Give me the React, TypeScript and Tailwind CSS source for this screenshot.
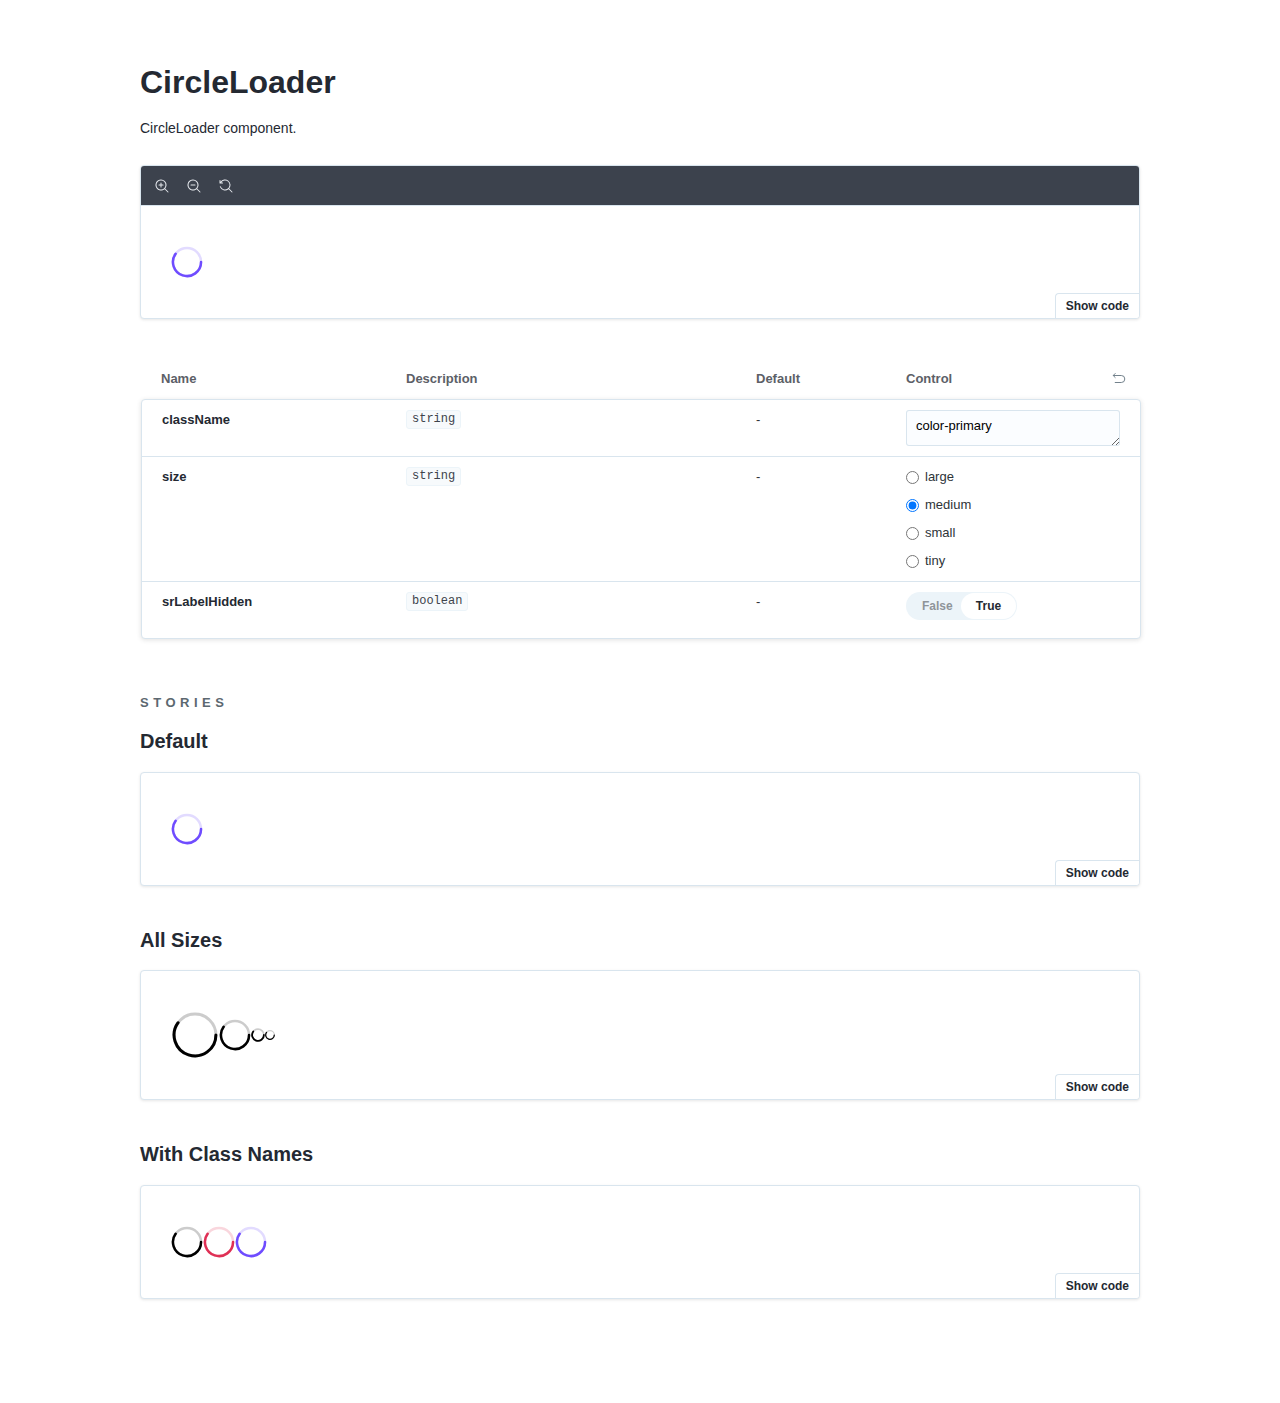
import type { ReactNode } from "react";

const GLASS =
  "M9.544 10.206a5.5 5.5 0 11.662-.662.5.5 0 01.148.102l3 3a.5.5 0 01-.708.708l-3-3a.5.5 0 01-.102-.148zM10.5 6a4.5 4.5 0 11-9 0 4.5 4.5 0 019 0z";

const TOOL_ICONS = [
  `M6 3.5a.5.5 0 01.5.5v1.5H8a.5.5 0 010 1H6.5V8a.5.5 0 01-1 0V6.5H4a.5.5 0 010-1h1.5V4a.5.5 0 01.5-.5z${GLASS}`,
  `M4 5.5a.5.5 0 000 1h4a.5.5 0 000-1H4z${GLASS}`,
  "M1.5 2.837V1.5a.5.5 0 00-1 0V4a.5.5 0 00.5.5h2.5a.5.5 0 000-1H2.258a4.5 4.5 0 11-.496 4.016.5.5 0 10-.942.337 5.502 5.502 0 008.724 2.353.5.5 0 00.102.148l3 3a.5.5 0 00.708-.708l-3-3a.5.5 0 00-.148-.102A5.5 5.5 0 101.5 2.837z",
];

function Loader({
  size,
  outer = 15.3,
  stroke = 2.5,
  color = "text-black",
}: {
  size: number;
  outer?: number;
  stroke?: number;
  color?: string;
}) {
  const c = size / 2;
  const r = outer - stroke / 2;
  const a = (216 * Math.PI) / 180;
  return (
    <svg width={size} height={size} fill="none" stroke="currentColor" strokeWidth={stroke} className={color}>
      <circle cx={c} cy={c} r={r} opacity="0.2" />
      <path d={`M${c + r} ${c}A${r} ${r} 0 1 1 ${c + r * Math.cos(a)} ${c + r * Math.sin(a)}`} strokeLinecap="round" />
    </svg>
  );
}

function Preview({ height, toolbar, children }: { height: string; toolbar?: boolean; children: ReactNode }) {
  return (
    <div className="relative overflow-hidden rounded-[4px] border border-[#d9e5ee] bg-white shadow-[0_1px_3px_0_rgba(0,0,0,0.1)]">
      {toolbar && (
        <div className="flex h-10 items-center gap-[18px] border-b border-[#d9e5ee] bg-[#3c424d] pl-3.5 text-[#e6e9ee]">
          {TOOL_ICONS.map((d) => (
            <svg key={d} width="14" height="14" viewBox="0 0 14 14" fill="currentColor">
              <path fillRule="evenodd" d={d} />
            </svg>
          ))}
        </div>
      )}
      <div className={`flex items-center pl-[30px] ${height}`}>{children}</div>
      <button className="absolute right-0 bottom-0 h-[25px] rounded-tl-[4px] border-t border-l border-[#d9e5ee] bg-white px-2.5 text-xs leading-4 font-bold text-[#242932]">
        Show code
      </button>
    </div>
  );
}

function Row({ name, type, height, children }: { name: string; type: string; height: string; children: ReactNode }) {
  return (
    <div className={`grid grid-cols-[244px_350px_150px_1fr] pt-2.5 pr-5 pl-5 text-[13px] leading-5 text-[#2e3438] ${height}`}>
      <div className="font-bold text-[#242932]">{name}</div>
      <div>
        <span className="block h-[19px] w-fit rounded-[3px] border border-[#ecf4f9] bg-[#f7fafc] px-[5px] font-['Liberation_Mono',monospace] text-xs leading-[17px] text-[#3d434b]">
          {type}
        </span>
      </div>
      <div>-</div>
      <div>{children}</div>
    </div>
  );
}

const H3 = "text-xl leading-6 font-bold text-[#242932]";

export default function App() {
  return (
    <div className="min-h-[1403px] bg-white font-['Liberation_Sans',Arial,sans-serif] text-[#242932]">
      <main className="mx-auto w-[1000px] pt-16">
        <h1 className="text-[32px] leading-9 font-bold">CircleLoader</h1>
        <p className="mt-4 mb-[25px] text-sm leading-6">CircleLoader component.</p>
        <Preview height="h-28" toolbar>
          <Loader size={32} color="text-[#6f4cff]" />
        </Preview>

        <section className="mt-10 w-[1001px]">
          <div className="grid h-10 grid-cols-[245px_350px_150px_1fr] items-center pr-[15px] pl-[21px] text-[13px] font-bold text-[#5c6067]">
            <span>Name</span>
            <span>Description</span>
            <span>Default</span>
            <span className="flex items-center justify-between">
              Control
              <svg width="14" height="14" viewBox="0 0 14 14" fill="none" stroke="#73828c" strokeLinecap="round" strokeLinejoin="round">
                <path d="M3.2 1.5 1.2 3.5l2 2M1.4 3.5h7.9a3.5 3.5 0 0 1 0 7H3.2" />
              </svg>
            </span>
          </div>
          <div className="ml-px divide-y divide-[#d9e5ee] rounded-[4px] border border-[#d9e5ee] bg-white shadow-[0_1px_5px_rgba(0,0,0,0.12)]">
            <Row name="className" type="string" height="h-[57px]">
              <textarea
                defaultValue="color-primary"
                className="block h-9 w-[214px] resize overflow-hidden rounded-[3px] bg-[#fbfdff] px-[10px] py-[6px] text-[13px] leading-5 text-black shadow-[inset_0_0_0_1px_#d9e5ee]"
              />
            </Row>
            <Row name="size" type="string" height="h-[125px]">
              <div className="flex flex-col gap-2">
                {["large", "medium", "small", "tiny"].map((s) => (
                  <label key={s} className="flex h-5 items-start">
                    <input type="radio" name="size" defaultChecked={s === "medium"} className="mt-1 mr-1.5 size-[13px]" />
                    {s}
                  </label>
                ))}
              </div>
            </Row>
            <Row name="srLabelHidden" type="boolean" height="h-14">
              <div className="flex h-7 w-[111px] items-center rounded-full bg-[#ecf4f9] p-px text-xs font-bold">
                <span className="w-[54px] pl-[15px] text-[#8f9499]">False</span>
                <span className="flex h-[26px] flex-1 items-center justify-center rounded-full bg-white text-[#242932]">True</span>
              </div>
            </Row>
          </div>
        </section>

        <h2 className="mt-14 text-[13px] leading-4 font-bold tracking-[4.5px] text-[#5c6870]">STORIES</h2>
        <h3 className={`mt-[18px] mb-[19px] ${H3}`}>Default</h3>
        <Preview height="h-28">
          <Loader size={32} color="text-[#6f4cff]" />
        </Preview>
        <h3 className={`mt-[42px] mb-[18px] ${H3}`}>All Sizes</h3>
        <Preview height="h-32">
          <Loader size={48} outer={22.4} stroke={3} />
          <Loader size={32} />
          <Loader size={14} outer={6.8} stroke={1.8} />
          <Loader size={10} outer={4.9} stroke={1.2} />
        </Preview>
        <h3 className={`mt-[42px] mb-[19px] ${H3}`}>With Class Names</h3>
        <Preview height="h-28">
          <Loader size={32} />
          <Loader size={32} color="text-[#df3055]" />
          <Loader size={32} color="text-[#6f4cff]" />
        </Preview>
      </main>
    </div>
  );
}
